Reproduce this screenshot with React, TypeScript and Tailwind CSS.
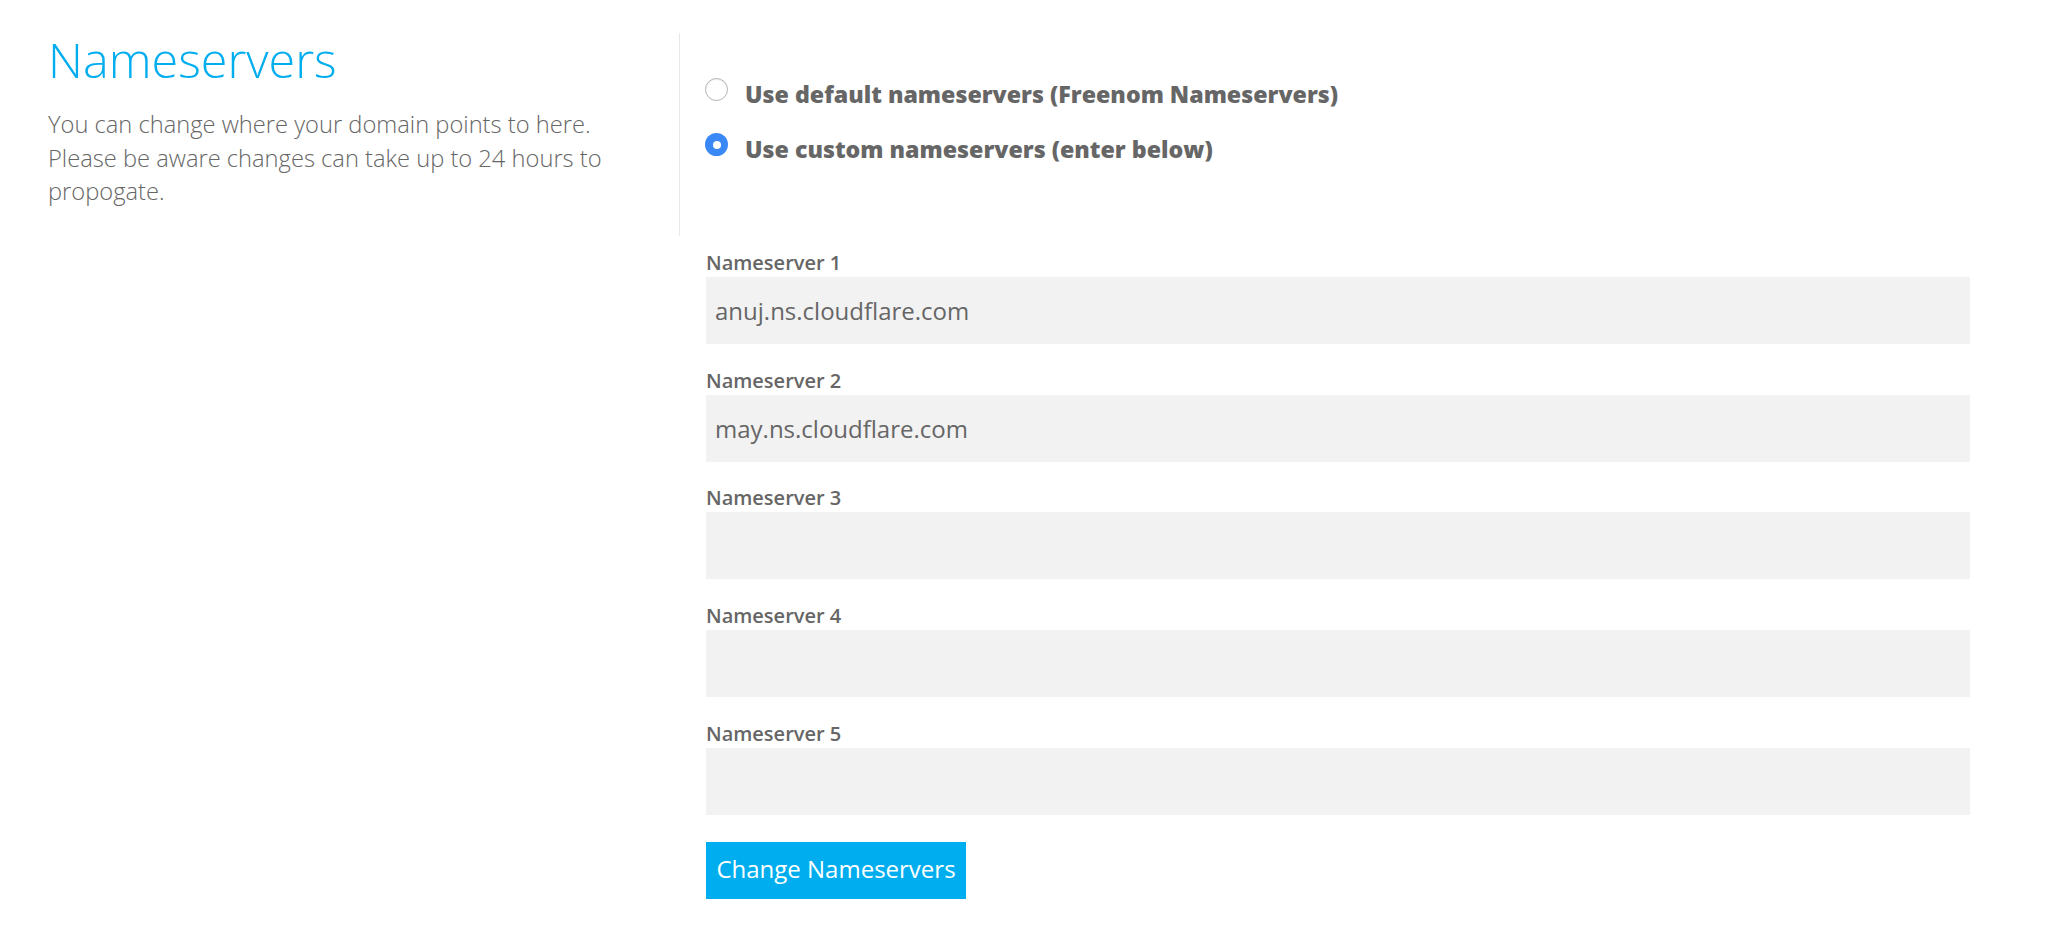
import { useState } from "react";

const FIELDS = [
  { label: "Nameserver 1", value: "anuj.ns.cloudflare.com" },
  { label: "Nameserver 2", value: "may.ns.cloudflare.com" },
  { label: "Nameserver 3", value: "" },
  { label: "Nameserver 4", value: "" },
  { label: "Nameserver 5", value: "" },
];

function Radio({ checked }: { checked: boolean }) {
  return checked ? (
    <span className="flex items-center justify-center w-[23px] h-[23px] shrink-0 rounded-full bg-[#3a87f6]">
      <span className="w-[8px] h-[8px] rounded-full bg-white" />
    </span>
  ) : (
    <span className="w-[23px] h-[23px] shrink-0 rounded-full border border-[#b3b3b3] bg-white shadow-[inset_0_1px_1px_rgba(0,0,0,0.06)]" />
  );
}

export default function App() {
  const [mode, setMode] = useState<"default" | "custom">("custom");
  const [values, setValues] = useState(FIELDS.map((f) => f.value));

  return (
    <div className="min-h-screen bg-white text-[#666] pt-[33px] font-['Open_Sans',sans-serif]">
      <div className="grid grid-cols-[680px_1fr]">
        <div className="pl-[48px] pb-[27px] border-r border-[#e8e8e8]">
          <h1 className="text-[48.5px] leading-[1.1] font-light text-[#00aeef]">Nameservers</h1>
          <p className="mt-[22px] text-[23.7px] leading-[33.5px] font-light text-[#666] w-[585px]">
            You can change where your domain points to here. Please be aware changes can take up to 24 hours to propogate.
          </p>
        </div>
        <div className="pl-[25px] pt-[45px] flex flex-col gap-[25px]">
          <label className="flex items-start gap-[17px] cursor-pointer" onClick={() => setMode("default")}>
            <Radio checked={mode === "default"} />
            <span className="pt-[2px] text-[23.2px] leading-[28px] font-extrabold">Use default nameservers (Freenom Nameservers)</span>
          </label>
          <label className="flex items-start gap-[17px] cursor-pointer" onClick={() => setMode("custom")}>
            <Radio checked={mode === "custom"} />
            <span className="pt-[2px] text-[23.2px] leading-[28px] font-extrabold">Use custom nameservers (enter below)</span>
          </label>
        </div>

        <div />
        <div className="pl-[26px] pr-[78px] pt-[15px]">
          <div className="flex flex-col gap-[24.7px]">
            {FIELDS.map((f, i) => (
              <div key={f.label} className="flex flex-col gap-[2px]">
                <span className="text-[20px] leading-[24px] font-semibold">{f.label}</span>
                <input
                  type="text"
                  value={values[i]}
                  onChange={(e) => setValues(values.map((v, j) => (j === i ? e.target.value : v)))}
                  className="h-[67px] w-full bg-[#f2f2f2] px-[9px] text-[24px] text-[#666] outline-none"
                />
              </div>
            ))}
          </div>
          <button type="button" className="mt-[27px] w-[260px] h-[57px] bg-[#00aeef] text-white text-[24px] leading-none pb-[3px]">
            Change Nameservers
          </button>
        </div>
      </div>
    </div>
  );
}
